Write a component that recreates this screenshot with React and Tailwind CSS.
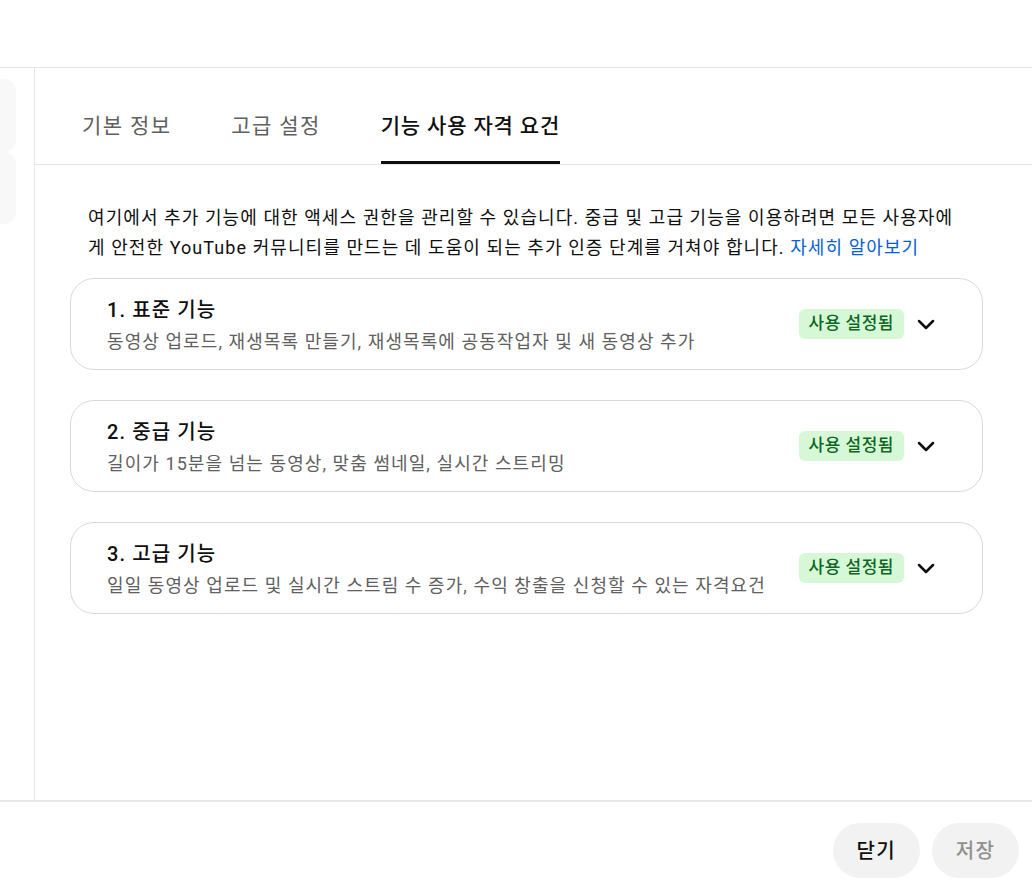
import React, { useState } from 'react';

const levels = [
    { title: '1. 표준 기능', desc: '동영상 업로드, 재생목록 만들기, 재생목록에 공동작업자 및 새 동영상 추가' },
    { title: '2. 중급 기능', desc: '길이가 15분을 넘는 동영상, 맞춤 썸네일, 실시간 스트리밍' },
    { title: '3. 고급 기능', desc: '일일 동영상 업로드 및 실시간 스트림 수 증가, 수익 창출을 신청할 수 있는 자격요건' },
];

const tabs = ['기본 정보', '고급 설정', '기능 사용 자격 요건'];

const Chevron = () => (
    <svg width="24" height="24" viewBox="0 0 24 24" fill="none">
        <path d="M5 9l7 7 7-7" stroke="#0f0f0f" strokeWidth="2.5" strokeLinecap="round" strokeLinejoin="round" />
    </svg>
);

const App = () => {
    const [active, setActive] = useState(2);

    return (
        <div
            className="w-[1032px] h-[882px] flex flex-col bg-white text-[#0f0f0f] overflow-hidden"
            style={{ fontFamily: 'Roboto, "Noto Sans CJK KR", "Noto Sans", sans-serif' }}
        >
            {/* top bar */}
            <div className="h-[68px] shrink-0 border-b border-[#e5e5e5]" />

            <div className="flex flex-1 min-h-0">
                {/* left rail */}
                <div className="w-[35px] shrink-0 border-r border-[#e5e5e5] pt-[11px]">
                    <div className="w-[16px] h-[73px] bg-[#f8f8f8] rounded-r-[12px]" />
                    <div className="w-[16px] h-[72px] bg-[#f8f8f8] rounded-r-[12px]" />
                </div>

                <div className="flex-1 flex flex-col">
                    {/* tabs */}
                    <div className="flex gap-[60px] pl-[47px] pt-[44px] border-b border-[#e5e5e5]">
                        {tabs.map((t, i) => (
                            <button
                                key={t}
                                onClick={() => setActive(i)}
                                className="flex flex-col items-stretch"
                            >
                                <span
                                    className={
                                        i === active
                                            ? 'text-[21px] leading-[28px] tracking-[0.04em] font-medium text-[#0f0f0f]'
                                            : 'text-[21px] leading-[28px] tracking-[0.065em] text-[#606060]'
                                    }
                                >
                                    {t}
                                </span>
                                <span className="h-[21px]" />
                                <span className={i === active ? 'h-[3px] bg-[#0f0f0f]' : 'h-[3px]'} />
                            </button>
                        ))}
                    </div>

                    <div className="pl-[35px] pr-[49px] pt-[38px]">
                        <p className="px-[18px] text-[18px] leading-[30px] tracking-[0.06em]">
                            여기에서 추가 기능에 대한 액세스 권한을 관리할 수 있습니다. 중급 및 고급 기능을 이용하려면 모든 사용자에게 안전한 YouTube 커뮤니티를 만드는 데 도움이 되는 추가 인증 단계를 거쳐야 합니다.{' '}
                            <a href="#" className="text-[#065fd4]">자세히 알아보기</a>
                        </p>

                        <div className="mt-[15px] flex flex-col gap-[30px]">
                            {levels.map((l) => (
                                <div
                                    key={l.title}
                                    className="h-[92px] border border-[#d9d9d9] rounded-[24px] flex items-center pl-[36px] pr-[44px]"
                                >
                                    <div className="flex-1 flex flex-col gap-[6px] pt-[2px]">
                                        <div className="text-[20px] leading-[28px] tracking-[0.055em] font-medium">{l.title}</div>
                                        <div className="text-[18px] leading-[24px] tracking-[0.06em] text-[#606060]">{l.desc}</div>
                                    </div>
                                    <div className="flex items-center gap-[10px]">
                                        <span className="h-[30px] px-[10px] rounded-[6px] bg-[#d7f8d6] text-[#0b6623] text-[17px] tracking-[0.03em] font-medium flex items-center">
                                            사용 설정됨
                                        </span>
                                        <Chevron />
                                    </div>
                                </div>
                            ))}
                        </div>
                    </div>
                </div>
            </div>

            {/* footer */}
            <div className="h-[82px] shrink-0 border-t-2 border-[#e5e5e5] flex justify-end items-start gap-[12px] pt-[21px] pr-[13px]">
                <button className="h-[55px] px-[24px] rounded-full bg-[#f2f2f2] text-[20px] tracking-[0.06em] font-medium text-[#0f0f0f]">
                    닫기
                </button>
                <button className="h-[55px] px-[24px] rounded-full bg-[#f2f2f2] text-[20px] tracking-[0.06em] font-medium text-[#909090]">
                    저장
                </button>
            </div>
        </div>
    );
};

export default App;
